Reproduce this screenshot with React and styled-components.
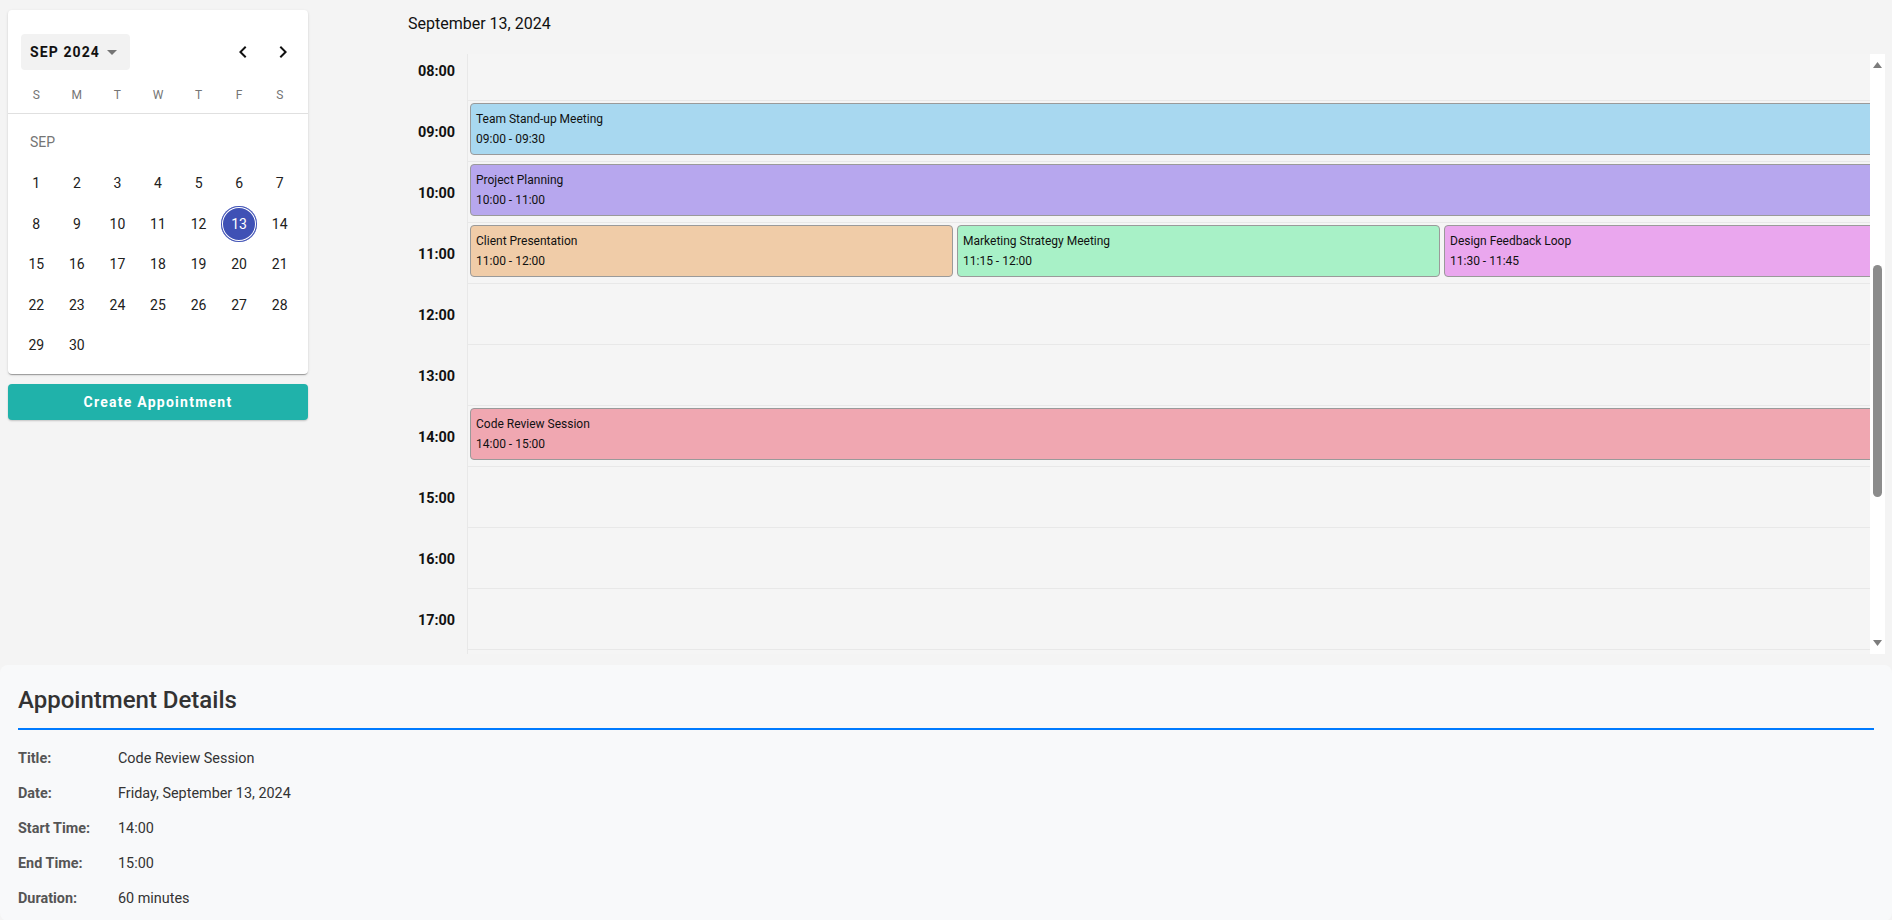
import React, { useLayoutEffect, useRef, useState } from "react";
import styled, { createGlobalStyle } from "styled-components";

const GlobalStyle = createGlobalStyle`
  html, body {
    margin: 0;
    padding: 0;
    overflow: hidden;
  }
  body {
    background: #f4f4f4;
    font-family: Roboto, "Liberation Sans", sans-serif;
    color: #212121;
  }
`;

const Page = styled.div`
  display: flex;
  flex-direction: column;
`;

const Main = styled.div`
  display: flex;
`;

const Sidebar = styled.aside`
  width: 400px;
  flex-shrink: 0;
  padding: 10px 0 0 8px;
  box-sizing: border-box;
`;

const CalendarCard = styled.div`
  width: 300px;
  background: #fff;
  border-radius: 4px;
  box-shadow: 0 2px 1px -1px rgba(0, 0, 0, 0.2), 0 1px 1px 0 rgba(0, 0, 0, 0.14),
    0 1px 3px 0 rgba(0, 0, 0, 0.12);
  padding-bottom: 8px;
`;

const CalHeader = styled.div`
  display: flex;
  align-items: center;
  justify-content: space-between;
  padding: 22px 5px 0 13px;
`;

const MonthSelect = styled.div`
  display: flex;
  align-items: center;
  height: 36px;
  padding: 0 6px 0 9px;
  background: #f2f2f2;
  border-radius: 4px;
  font-size: 14px;
  font-weight: 700;
  letter-spacing: 1.1px;
  color: #111;
`;

const NavGroup = styled.div`
  display: flex;
`;

const NavButton = styled.button`
  width: 40px;
  height: 40px;
  border: none;
  background: transparent;
  display: flex;
  align-items: center;
  justify-content: center;
  padding: 0;
  color: #111;
`;

const Weekdays = styled.div`
  display: grid;
  grid-template-columns: repeat(7, 1fr);
  padding: 0 8px;
  margin-top: 5px;
  height: 36px;
  align-items: center;
  border-bottom: 1px solid #e0e0e0;
`;

const Weekday = styled.span`
  text-align: center;
  font-size: 12px;
  color: #757575;
`;

const MonthLabel = styled.div`
  padding: 19px 22px 12px;
  line-height: 18px;
  font-size: 14px;
  color: #757575;
`;

const DayGrid = styled.div`
  display: grid;
  grid-template-columns: repeat(7, 1fr);
  grid-auto-rows: 40.5px;
  padding: 0 8px;
`;

const Day = styled.div`
  display: flex;
  align-items: center;
  justify-content: center;
  font-size: 14px;
  color: #212121;
`;

const DayCircle = styled.span`
  width: 36px;
  height: 36px;
  border-radius: 50%;
  display: flex;
  align-items: center;
  justify-content: center;
  background: ${(p) => (p.$selected ? "#3f51b5" : "transparent")};
  color: ${(p) => (p.$selected ? "#fff" : "inherit")};
  box-shadow: ${(p) =>
    p.$selected ? "inset 0 0 0 1px #3f51b5, inset 0 0 0 2px #fff" : "none"};
`;

const CreateButton = styled.button`
  margin-top: 10px;
  width: 300px;
  height: 36px;
  border: none;
  border-radius: 4px;
  background: #20b2aa;
  color: #fff;
  font-family: inherit;
  font-size: 14px;
  font-weight: 700;
  letter-spacing: 1.25px;
  box-shadow: 0 1px 2px rgba(0, 0, 0, 0.2);
`;

const Scheduler = styled.section`
  flex: 1;
  min-width: 0;
  padding: 0 7px 11px 0;
`;

const DateTitle = styled.div`
  height: 54px;
  box-sizing: border-box;
  padding: 14px 0 0 8px;
  line-height: 20px;
  font-size: 16px;
  color: #111;
`;

const ScrollFrame = styled.div`
  display: flex;
  height: 600px;
`;

const ScheduleViewport = styled.div`
  flex: 1;
  min-width: 0;
  overflow-y: auto;
  overflow-x: hidden;
  scrollbar-width: none;
`;

const Rail = styled.div`
  position: relative;
  width: 15px;
  flex-shrink: 0;
  background: #fff;
  display: flex;
  flex-direction: column;
  justify-content: space-between;
`;

const RailButton = styled.div`
  height: 17px;
  display: flex;
  justify-content: center;
  align-items: ${(p) => (p.$down ? "flex-start" : "flex-end")};
  padding: ${(p) => (p.$down ? "3px 0 0" : "0 0 3px")};
  box-sizing: border-box;
`;

const Thumb = styled.div`
  position: absolute;
  left: 3px;
  width: 9px;
  border-radius: 5px;
  background: #8c8c8c;
`;

const HourRow = styled.div`
  display: flex;
  height: 61px;
`;

const TimeLabel = styled.div`
  width: 67px;
  flex-shrink: 0;
  box-sizing: border-box;
  padding: 2px 12px 0 0;
  display: flex;
  align-items: center;
  justify-content: flex-end;
  font-size: 14.4px;
  font-weight: 700;
  color: #111;
`;

const Slot = styled.div`
  flex: 1;
  min-width: 0;
  overflow: hidden;
  box-sizing: border-box;
  padding: 2px 0 0 2px;
  border-left: 1px solid #e8e8e8;
  border-bottom: 1px solid #e8e8e8;
  background: #f5f5f5;
`;

const EventTrack = styled.div`
  display: flex;
  gap: 4px;
  width: 1457px;
`;

const EventBox = styled.div`
  flex: 1 1 0;
  height: 52px;
  box-sizing: border-box;
  border: 1px solid #9a9a9a;
  border-radius: 4px;
  background: ${(p) => p.$color};
  padding: 7px 5px;
  font-size: 12px;
  color: #111;
`;

const EventLine = styled.div`
  line-height: 16px;
  & + & {
    margin-top: 4px;
  }
`;

const Details = styled.section`
  background: #f8f9fa;
  border-radius: 8px;
  padding: 21px 18px 12px;
`;

const DetailsHeading = styled.h2`
  margin: 0;
  font-size: 24px;
  font-weight: 500;
  line-height: 28px;
  color: #333;
  padding-bottom: 14px;
  border-bottom: 2px solid #007bff;
`;

const DetailList = styled.div`
  margin-top: 19px;
  display: flex;
  flex-direction: column;
  gap: 15px;
`;

const DetailRow = styled.div`
  display: flex;
  line-height: 20px;
  font-size: 14.4px;
`;

const DetailLabel = styled.span`
  width: 100px;
  font-weight: 700;
  color: #555;
`;

const DetailValue = styled.span`
  color: #333;
`;

const ChevronLeft = () => (
  <svg width="24" height="24" viewBox="0 0 24 24" fill="currentColor">
    <path d="M15.41 7.41 14 6l-6 6 6 6 1.41-1.41L10.83 12z" />
  </svg>
);

const ChevronRight = () => (
  <svg width="24" height="24" viewBox="0 0 24 24" fill="currentColor">
    <path d="M10 6 8.59 7.41 13.17 12l-4.58 4.59L10 18l6-6z" />
  </svg>
);

const ArrowDropDown = () => (
  <svg width="24" height="24" viewBox="0 0 24 24" fill="#757575">
    <path d="M7 10l5 5 5-5z" />
  </svg>
);

const RailArrow = ({ down }) => (
  <svg width="9" height="6" viewBox="0 0 9 6" fill="#7d7d7d">
    <path d={down ? "M0 0H9L4.5 6z" : "M4.5 0L9 6H0z"} />
  </svg>
);

const events = [
  { hour: 9, title: "Team Stand-up Meeting", time: "09:00 - 09:30", color: "#a8d8f0" },
  { hour: 10, title: "Project Planning", time: "10:00 - 11:00", color: "#b7a7ee" },
  { hour: 11, title: "Client Presentation", time: "11:00 - 12:00", color: "#f0cca8" },
  { hour: 11, title: "Marketing Strategy Meeting", time: "11:15 - 12:00", color: "#a8f1c7" },
  { hour: 11, title: "Design Feedback Loop", time: "11:30 - 11:45", color: "#eaa7ee" },
  { hour: 14, title: "Code Review Session", time: "14:00 - 15:00", color: "#f0a7b1" },
];

const hours = Array.from({ length: 24 }, (_, i) => i);
const days = Array.from({ length: 30 }, (_, i) => i + 1);
const weekdays = ["S", "M", "T", "W", "T", "F", "S"];

const pad = (n) => String(n).padStart(2, "0");
const BUTTON_H = 17;

export default function App() {
  const scrollRef = useRef(null);
  const [thumb, setThumb] = useState({ top: BUTTON_H, height: 0 });

  const updateThumb = () => {
    const el = scrollRef.current;
    if (!el) return;
    const track = el.clientHeight - BUTTON_H * 2;
    const height = (track * el.clientHeight) / el.scrollHeight;
    const top = BUTTON_H + (track * el.scrollTop) / el.scrollHeight;
    setThumb({ top, height });
  };

  useLayoutEffect(() => {
    // start the day view around 08:00
    if (scrollRef.current) scrollRef.current.scrollTop = 502;
    updateThumb();
  }, []);

  return (
    <>
      <GlobalStyle />
      <Page>
        <Main>
          <Sidebar>
            <CalendarCard>
              <CalHeader>
                <MonthSelect>
                  SEP 2024
                  <ArrowDropDown />
                </MonthSelect>
                <NavGroup>
                  <NavButton>
                    <ChevronLeft />
                  </NavButton>
                  <NavButton>
                    <ChevronRight />
                  </NavButton>
                </NavGroup>
              </CalHeader>
              <Weekdays>
                {weekdays.map((d, i) => (
                  <Weekday key={i}>{d}</Weekday>
                ))}
              </Weekdays>
              <MonthLabel>SEP</MonthLabel>
              <DayGrid>
                {days.map((d) => (
                  <Day key={d}>
                    <DayCircle $selected={d === 13}>{d}</DayCircle>
                  </Day>
                ))}
              </DayGrid>
            </CalendarCard>
            <CreateButton>Create Appointment</CreateButton>
          </Sidebar>

          <Scheduler>
            <DateTitle>September 13, 2024</DateTitle>
            <ScrollFrame>
              <ScheduleViewport ref={scrollRef} onScroll={updateThumb}>
                {hours.map((h) => {
                  const list = events.filter((e) => e.hour === h);
                  return (
                    <HourRow key={h}>
                      <TimeLabel>{pad(h)}:00</TimeLabel>
                      <Slot>
                        {list.length > 0 && (
                          <EventTrack>
                            {list.map((e) => (
                              <EventBox key={e.title} $color={e.color}>
                                <EventLine>{e.title}</EventLine>
                                <EventLine>{e.time}</EventLine>
                              </EventBox>
                            ))}
                          </EventTrack>
                        )}
                      </Slot>
                    </HourRow>
                  );
                })}
              </ScheduleViewport>
              <Rail>
                <RailButton>
                  <RailArrow />
                </RailButton>
                <RailButton $down>
                  <RailArrow down />
                </RailButton>
                <Thumb style={{ top: thumb.top, height: thumb.height }} />
              </Rail>
            </ScrollFrame>
          </Scheduler>
        </Main>

        <Details>
          <DetailsHeading>Appointment Details</DetailsHeading>
          <DetailList>
            <DetailRow>
              <DetailLabel>Title:</DetailLabel>
              <DetailValue>Code Review Session</DetailValue>
            </DetailRow>
            <DetailRow>
              <DetailLabel>Date:</DetailLabel>
              <DetailValue>Friday, September 13, 2024</DetailValue>
            </DetailRow>
            <DetailRow>
              <DetailLabel>Start Time:</DetailLabel>
              <DetailValue>14:00</DetailValue>
            </DetailRow>
            <DetailRow>
              <DetailLabel>End Time:</DetailLabel>
              <DetailValue>15:00</DetailValue>
            </DetailRow>
            <DetailRow>
              <DetailLabel>Duration:</DetailLabel>
              <DetailValue>60 minutes</DetailValue>
            </DetailRow>
          </DetailList>
        </Details>
      </Page>
    </>
  );
}
